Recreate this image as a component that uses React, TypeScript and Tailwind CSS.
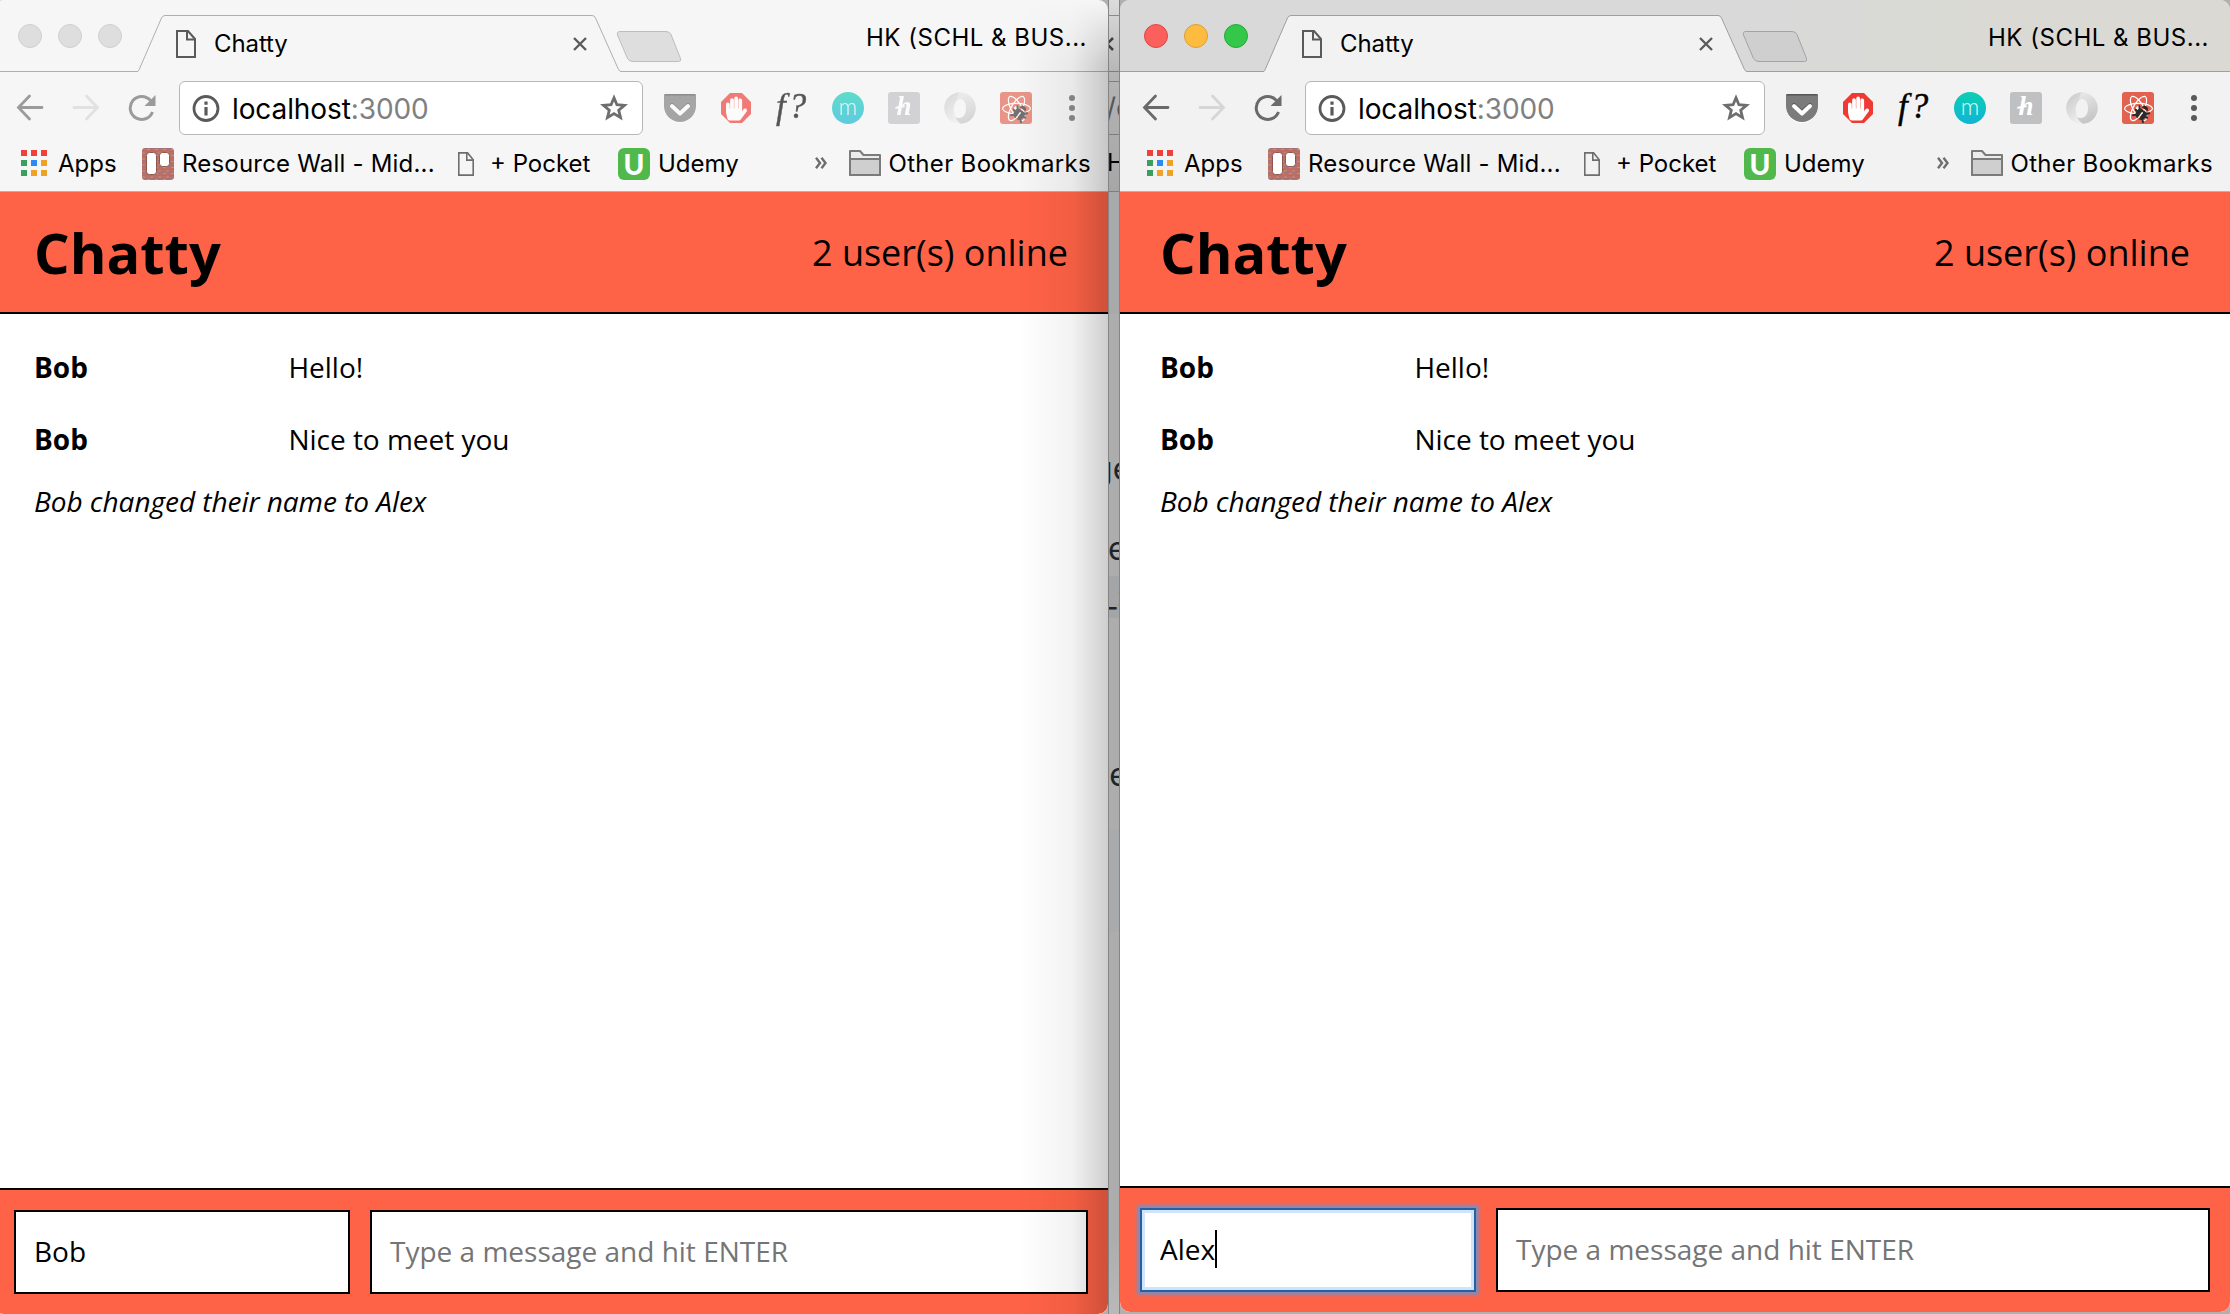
import { FaHandPaper, FaReact, FaBug } from "react-icons/fa";

type WindowProps = { active: boolean; user: string };

function PageIcon({ className }: { className: string }) {
  return (
    <svg viewBox="0 0 20 28" preserveAspectRatio="none" className={className} fill="none" stroke="currentColor" strokeWidth="2">
      <path d="M1 1h11l7 8v18H1z" />
      <path d="M11 1v8.5h8" />
    </svg>
  );
}

function TrafficLights({ active }: { active: boolean }) {
  const colors = active
    ? ["bg-[#fc605c] border-[#df4744]", "bg-[#fdbc40] border-[#de9f34]", "bg-[#34c84a] border-[#27aa35]"]
    : ["bg-[#dedede] border-[#d0d0d0]", "bg-[#dedede] border-[#d0d0d0]", "bg-[#dedede] border-[#d0d0d0]"];
  return (
    <div className="flex gap-4 pt-6 pl-6">
      {colors.map((c, i) => (
        <div key={i} className={`size-6 rounded-full border ${c}`} />
      ))}
    </div>
  );
}

function TabStrip({ active }: { active: boolean }) {
  const line = active ? "#9f9f9d" : "#afafaf";
  return (
    <div
      className={`flex h-[72px] shrink-0 border-b ${
        active
          ? "border-[#9f9f9d] bg-linear-to-r from-[#d9d9d9] from-60% to-[#dad9d3] to-80%"
          : "border-[#afafaf] bg-[#f6f6f6]"
      }`}
    >
      <TrafficLights active={active} />
      <div className="relative ml-4 flex h-[72px] w-[484px] shrink-0 items-center pt-[15px] pl-[38px]">
        <svg viewBox="0 0 484 72" className="absolute inset-0 h-[72px] w-[484px]">
          <path
            d="M-1 72V71.5Q.500 71.500 1.200 69.500L23.500 18Q24.500 15.500 27 15.500H454Q456.500 15.500 457.500 18L480.500 69.500Q481.500 71.500 483 71.500V72Z"
            fill={active ? "#f2f2f2" : "#f6f6f6"}
          />
          <path
            d="M-1 71.500Q.500 71.500 1.200 69.500L23.500 18Q24.500 15.500 27 15.500H454Q456.500 15.500 457.500 18L480.500 69.500Q481.500 71.500 483 71.500"
            fill="none"
            stroke={line}
          />
        </svg>
        <PageIcon className="relative h-7 w-5 text-[#5a5a5a]" />
        <span className="relative ml-[18px] text-2xl leading-none tracking-[-0.1px]">Chatty</span>
        <svg viewBox="0 0 14 14" className="relative mr-[35px] ml-auto size-3.5" stroke="#5a5a5a" strokeWidth="2.400">
          <path d="M1 1l12 12M13 1L1 13" />
        </svg>
      </div>
      <svg viewBox="0 0 66 32" className="mt-[31px] -ml-[6px] h-8 w-[66px] shrink-0">
        <path
          d="M4 .5H50Q53.500 .5 55 3.500L64.500 27.500Q65.500 30.500 62.500 30.500H17Q13 30.500 11.500 27.500L1.500 4Q.500 .5 4 .5Z"
          fill={active ? "#cfcfcf" : "#dedede"}
          stroke={active ? "#a3a3a3" : "#bdbdbd"}
        />
      </svg>
      <span className="mt-[26px] mr-[21px] ml-auto text-2xl leading-6 tracking-[0.5px]">HK (SCHL &amp; BUS...</span>
    </div>
  );
}

function PocketIcon() {
  return (
    <svg viewBox="0 0 32 32" className="size-8">
      <path d="M0 4h32v11a16 16 0 0 1-32 0z" fill="#fff" />
      <path d="M0 3.500Q0 2 1.500 2h29Q32 2 32 3.500V14a16 16 0 0 1-32 0z" fill="#7b7b7b" />
      <path d="M0 3.500Q0 2 1.500 2h29Q32 2 32 3.500z" fill="#555" />
      <path d="M8 13l8 7.500 8-7.500" fill="none" stroke="#555" strokeWidth="4" strokeLinecap="round" strokeLinejoin="round" />
      <path d="M8 14l8 7.500 8-7.500" fill="none" stroke="#fff" strokeWidth="4" strokeLinecap="round" strokeLinejoin="round" />
    </svg>
  );
}

function SwirlIcon() {
  return (
    <svg viewBox="0 0 32 32" className="size-8">
      <defs>
        <linearGradient id="swirlA" x1="0" y1="0" x2="0.5" y2="1">
          <stop offset="0" stopColor="#c6c6c6" />
          <stop offset="1" stopColor="#ededed" />
        </linearGradient>
        <linearGradient id="swirlB" x1="0.5" y1="0" x2="0.8" y2="1">
          <stop offset="0" stopColor="#e6e6e6" />
          <stop offset="1" stopColor="#c0c0c0" />
        </linearGradient>
      </defs>
      <path d="M17 .3C7 .3 .2 7.500 .2 16S7 31.700 15 31.700C12 29 10.500 26 10.500 22 8.500 15 11 8 17 6Z" fill="url(#swirlA)" />
      <path d="M15 .3C25 .3 31.800 7.500 31.800 16S25 31.700 17 31.700C15 31 12.500 28.500 11 25 17 28 22 24 22 16 22 9 18 6 13 7Z" fill="url(#swirlB)" />
    </svg>
  );
}

function Extensions({ active }: { active: boolean }) {
  return (
    <div className={`ml-[21px] flex items-center gap-6 ${active ? "" : "opacity-65"}`}>
      <PocketIcon />
      <div className="relative flex size-8 items-center justify-center">
        <svg viewBox="0 0 32 32" className="absolute inset-0 size-8">
          <path d="M10 1h12l9 9v12l-9 9H10l-9-9V10z" fill="#ee3a32" />
        </svg>
        <FaHandPaper className="relative h-[25px] w-[21px] -scale-x-100 text-white" />
      </div>
      <div className="w-8 pb-0.5 text-center font-['Liberation_Serif'] text-[35px] leading-8 tracking-[3px] italic [-webkit-text-stroke:0.4px_black]">
        f?
      </div>
      <div className="flex size-8 items-center justify-center rounded-full bg-linear-to-b from-[#0fceb2] to-[#12b4d4] pb-1 font-[Lato] text-[23px] leading-none font-light text-white/90">
        m
      </div>
      <div className="relative flex size-8 items-center justify-center rounded-[3px] bg-[#bfc0c2] pb-1 font-['Liberation_Serif'] text-[27px] leading-none font-bold text-white italic">
        h
        <div className="absolute top-[14px] left-[7px] h-0.5 w-2.5 -rotate-12 rounded-full bg-white" />
      </div>
      <SwirlIcon />
      <div className="relative flex size-8 items-center justify-center rounded-[3px] bg-[#e2614f]">
        <FaReact className="size-[29px] text-white" />
        <FaBug className="absolute top-[13px] left-[12px] size-4 rotate-[35deg] text-[#2b2b2b]" />
      </div>
    </div>
  );
}

function Toolbar({ active }: { active: boolean }) {
  return (
    <div className="flex h-18 shrink-0 items-center">
      <div className={`flex w-[185px] shrink-0 pl-[22px] ${active ? "text-[#6a6a6a]" : "text-[#9b9b9b]"}`}>
        <svg viewBox="0 0 28 28" className="size-7" fill="none" stroke="currentColor" strokeWidth="2.800" strokeLinecap="round">
          <path d="M26 13.500H3M13.500 2L2.500 13.500 13.500 25" />
        </svg>
        <svg
          viewBox="0 0 28 28"
          className={`ml-7 size-7 ${active ? "text-[#d6d6d6]" : "text-[#e1e1e1]"}`}
          fill="none"
          stroke="currentColor"
          strokeWidth="2.800"
          strokeLinecap="round"
        >
          <path d="M2 13.500H25M14.500 2L25.500 13.500 14.500 25" />
        </svg>
        <svg viewBox="0 0 28 28" className="ml-7 size-7">
          <path d="M22.500 6.500A11.500 11.500 0 1 0 24.500 18" fill="none" stroke="currentColor" strokeWidth="3" />
          <path d="M27.500 1v11h-11z" fill="currentColor" />
        </svg>
      </div>
      <div className="flex h-[54px] grow items-center rounded-[6px] border border-[#b7b7b7] bg-white pl-3">
        <svg viewBox="0 0 28 28" className="size-7" fill="none" stroke="#5a5a5a" strokeWidth="2.800">
          <circle cx="14" cy="14.500" r="12" />
          <path d="M14 7.500v3.200M14 13v8.500" strokeWidth="3.200" />
        </svg>
        <span className="ml-3 pt-0.5 text-[28px] leading-none tracking-[-0.1px]">
          localhost<span className="text-[#808080]">:3000</span>
        </span>
        <svg viewBox="0 0 28 28" className="mr-[14px] ml-auto size-7" fill="none" stroke="#6e6e6e" strokeWidth="2.800" strokeLinejoin="miter">
          <path d="M14 3.800L16.900 10.700 24.500 11.300 18.700 16.200 20.500 23.600 14 19.600 7.500 23.600 9.300 16.200 3.500 11.300 11.100 10.700Z" />
        </svg>
      </div>
      <Extensions active={active} />
      <div className={`mr-[33px] ml-[37px] flex flex-col gap-1 ${active ? "text-[#5a5a5a]" : "text-[#8a8a8a]"}`}>
        <div className="size-1.5 rounded-full bg-current" />
        <div className="size-1.5 rounded-full bg-current" />
        <div className="size-1.5 rounded-full bg-current" />
      </div>
    </div>
  );
}

const appSquares = [
  "bg-[#f0403a]", "bg-[#f0403a]", "bg-[#f0403a]",
  "bg-[#3a9f5b]", "bg-[#2a8af6]", "bg-[#f0a128]",
  "bg-[#3a9f5b]", "bg-[#f0a128]", "bg-[#f0a128]",
];

function TrelloIcon() {
  return (
    <svg viewBox="0 0 32 32" className="size-8 shrink-0">
      <defs>
        <pattern id="brick" width="8" height="6" patternUnits="userSpaceOnUse">
          <rect width="8" height="6" fill="#bd6f63" />
          <path d="M0 .5h5M3 3.500h5" stroke="#9f7480" />
          <path d="M5 1.500h3M0 5h3" stroke="#d48a66" />
        </pattern>
      </defs>
      <rect width="32" height="32" rx="3" fill="url(#brick)" />
      <rect x="4.500" y="4.500" width="10" height="22" rx="3" fill="#fff" stroke="#8f5650" />
      <rect x="17.500" y="4.500" width="10" height="14" rx="3" fill="#fff" stroke="#8f5650" />
    </svg>
  );
}

function Bookmarks() {
  return (
    <div className="flex h-12 shrink-0 items-center border-b border-[#b4b4b4] pb-2 pl-[27px] text-2xl leading-none">
      <div className="mt-[-1px] grid shrink-0 grid-cols-[6px_6px_6px] gap-1">
        {appSquares.map((c, i) => (
          <div key={i} className={`size-1.5 ${c}`} />
        ))}
      </div>
      <span className="ml-[11px] w-[84px] shrink-0">Apps</span>
      <TrelloIcon />
      <span className="ml-2 w-[276px] shrink-0 tracking-[0.2px]">Resource Wall - Mid...</span>
      <PageIcon className="h-6 w-4 shrink-0 text-[#6e6e6e]" />
      <span className="ml-4 w-32 shrink-0">+ Pocket</span>
      <div className="flex size-8 shrink-0 items-center justify-center rounded-[6px] bg-[#51b84b] font-[Lato] text-[28px] leading-none font-black text-white">
        U
      </div>
      <span className="ml-2">Udemy</span>
      <svg viewBox="0 0 12 12" className="mr-[22px] mb-0.5 ml-auto size-3" fill="none" stroke="#6e6e6e" strokeWidth="2.400">
        <path d="M1 .8L5 6 1 11.200M6.500 .8L10.500 6 6.500 11.200" />
      </svg>
      <svg viewBox="0 0 32 26" className="mb-0.5 h-[26px] w-8" stroke="#7b7b7b" strokeWidth="2" strokeLinejoin="round">
        <path d="M1 25V1h10l3.500 4H31v20z" fill="#ececec" />
        <path d="M1 9h30v16H1z" fill="#cfcfcf" />
      </svg>
      <span className="mr-[17px] ml-[7px] tracking-[0.33px]">Other Bookmarks</span>
    </div>
  );
}

function Message({ author, text }: { author: string; text: string }) {
  return (
    <div className="flex h-[72px] items-center">
      <span className="w-[254.5px] font-bold">{author}</span>
      <span className="tracking-[-0.03px]">{text}</span>
    </div>
  );
}

function ChatPage({ active, user }: WindowProps) {
  return (
    <div className="flex grow flex-col bg-white font-['Open_Sans'] text-[28px] leading-none">
      <header className="flex h-[122px] shrink-0 items-center justify-between border-b-2 border-black bg-[#ff6347] pr-10 pl-10">
        <h1 className="text-[56px] leading-none font-bold">Chatty</h1>
        <span className="pt-0.5 text-4xl leading-none">2 user(s) online</span>
      </header>
      <main className="grow pt-[17px] pl-10">
        <Message author="Bob" text="Hello!" />
        <Message author="Bob" text="Nice to meet you" />
        <p className="flex h-[51px] items-center tracking-[-0.04px] italic">Bob changed their name to Alex</p>
      </main>
      <footer className="flex shrink-0 gap-5 border-t-2 border-black bg-[#ff6347] p-5">
        <div
          className={`flex h-[84px] w-[336px] shrink-0 items-center border-2 bg-white pb-0.5 pl-[18px] ${
            active
              ? "border-[#2361a3] shadow-[0_0_3px_3px_rgba(92,152,220,0.75),inset_0_0_0_3px_#cfe3fb]"
              : "border-black"
          }`}
        >
          {user}
          {active && <div className="h-[38px] w-0.5 bg-black" />}
        </div>
        <div className="flex h-[84px] grow items-center border-2 border-black bg-white pb-0.5 pl-[18px] text-[#757575]">
          Type a message and hit ENTER
        </div>
      </footer>
    </div>
  );
}

function BrowserWindow({ active, user }: WindowProps) {
  return (
    <section
      className={`flex shrink-0 flex-col overflow-hidden rounded-[10px] ${
        active ? "h-[1312px] w-[1110px] bg-[#f2f2f2]" : "-ml-1.5 h-[1314px] w-[1114px] bg-[#f6f6f6]"
      }`}
    >
      <TabStrip active={active} />
      <Toolbar active={active} />
      <Bookmarks />
      <ChatPage active={active} user={user} />
    </section>
  );
}

/* Sliver of the window that sits behind the two chat windows. */
function BackgroundSliver() {
  return (
    <div className="relative flex w-3 shrink-0 flex-col overflow-hidden border-x border-[#858585] text-[32px] leading-10 text-[#1f2428]">
      <div className="h-[192px] shrink-0 border-b border-[#7d7d7d] bg-linear-to-b from-[#dcdcdc] via-[#b4b4b4] via-40% to-[#a6a6a6]" />
      <div className="h-[122px] shrink-0 bg-[#a7a9aa]" />
      <div className="h-[262px] shrink-0 bg-[#adadad]" />
      <div className="h-[42px] shrink-0 bg-[#a3a5a6]" />
      <div className="h-[212px] shrink-0 bg-[#adadad]" />
      <div className="h-[102px] shrink-0 bg-[#a8aaac]" />
      <div className="grow bg-linear-to-b from-[#adadad] from-80% to-[#b9b9b9]" />
      <div className="absolute top-[15px] h-px w-full bg-[#8a8a8a]" />
      <div className="absolute top-[71px] h-px w-full bg-[#7d7d7d]" />
      <div className="absolute top-[81px] h-px w-full bg-[#7d7d7d]" />
      <div className="absolute top-[134px] h-px w-full bg-[#7d7d7d]" />
      <svg viewBox="0 0 14 14" className="absolute top-[37px] -left-[9px] size-3.5" stroke="#3f3f3f" strokeWidth="2.600">
        <path d="M1 1l12 12M13 1L1 13" />
      </svg>
      <span className="absolute top-[88px] -left-[3px] text-[28px] text-[#55585c]">/c</span>
      <span className="absolute top-[143px] -left-[2px] text-2xl leading-10 text-black">H</span>
      <span className="absolute top-[449px] -left-[16px]">ge</span>
      <span className="absolute top-[529px] -left-px">e</span>
      <span className="absolute top-[576px] -left-[7px]">_:</span>
      <span className="absolute top-[755px] -left-[10px]">te</span>
    </div>
  );
}

export default function App() {
  return (
    <div className="relative flex h-[1314px] w-[2230px] overflow-hidden bg-[#b0b0b0] font-[Inter] text-black">
      <BrowserWindow active={false} user="Bob" />
      <div className="pointer-events-none absolute top-0 left-[1018px] h-full w-[90px] rounded-r-[10px] bg-linear-to-l from-black/19 via-black/5 via-40% to-transparent mask-t-from-95% mask-t-to-100%" />
      <BackgroundSliver />
      <BrowserWindow active user="Alex" />
    </div>
  );
}
